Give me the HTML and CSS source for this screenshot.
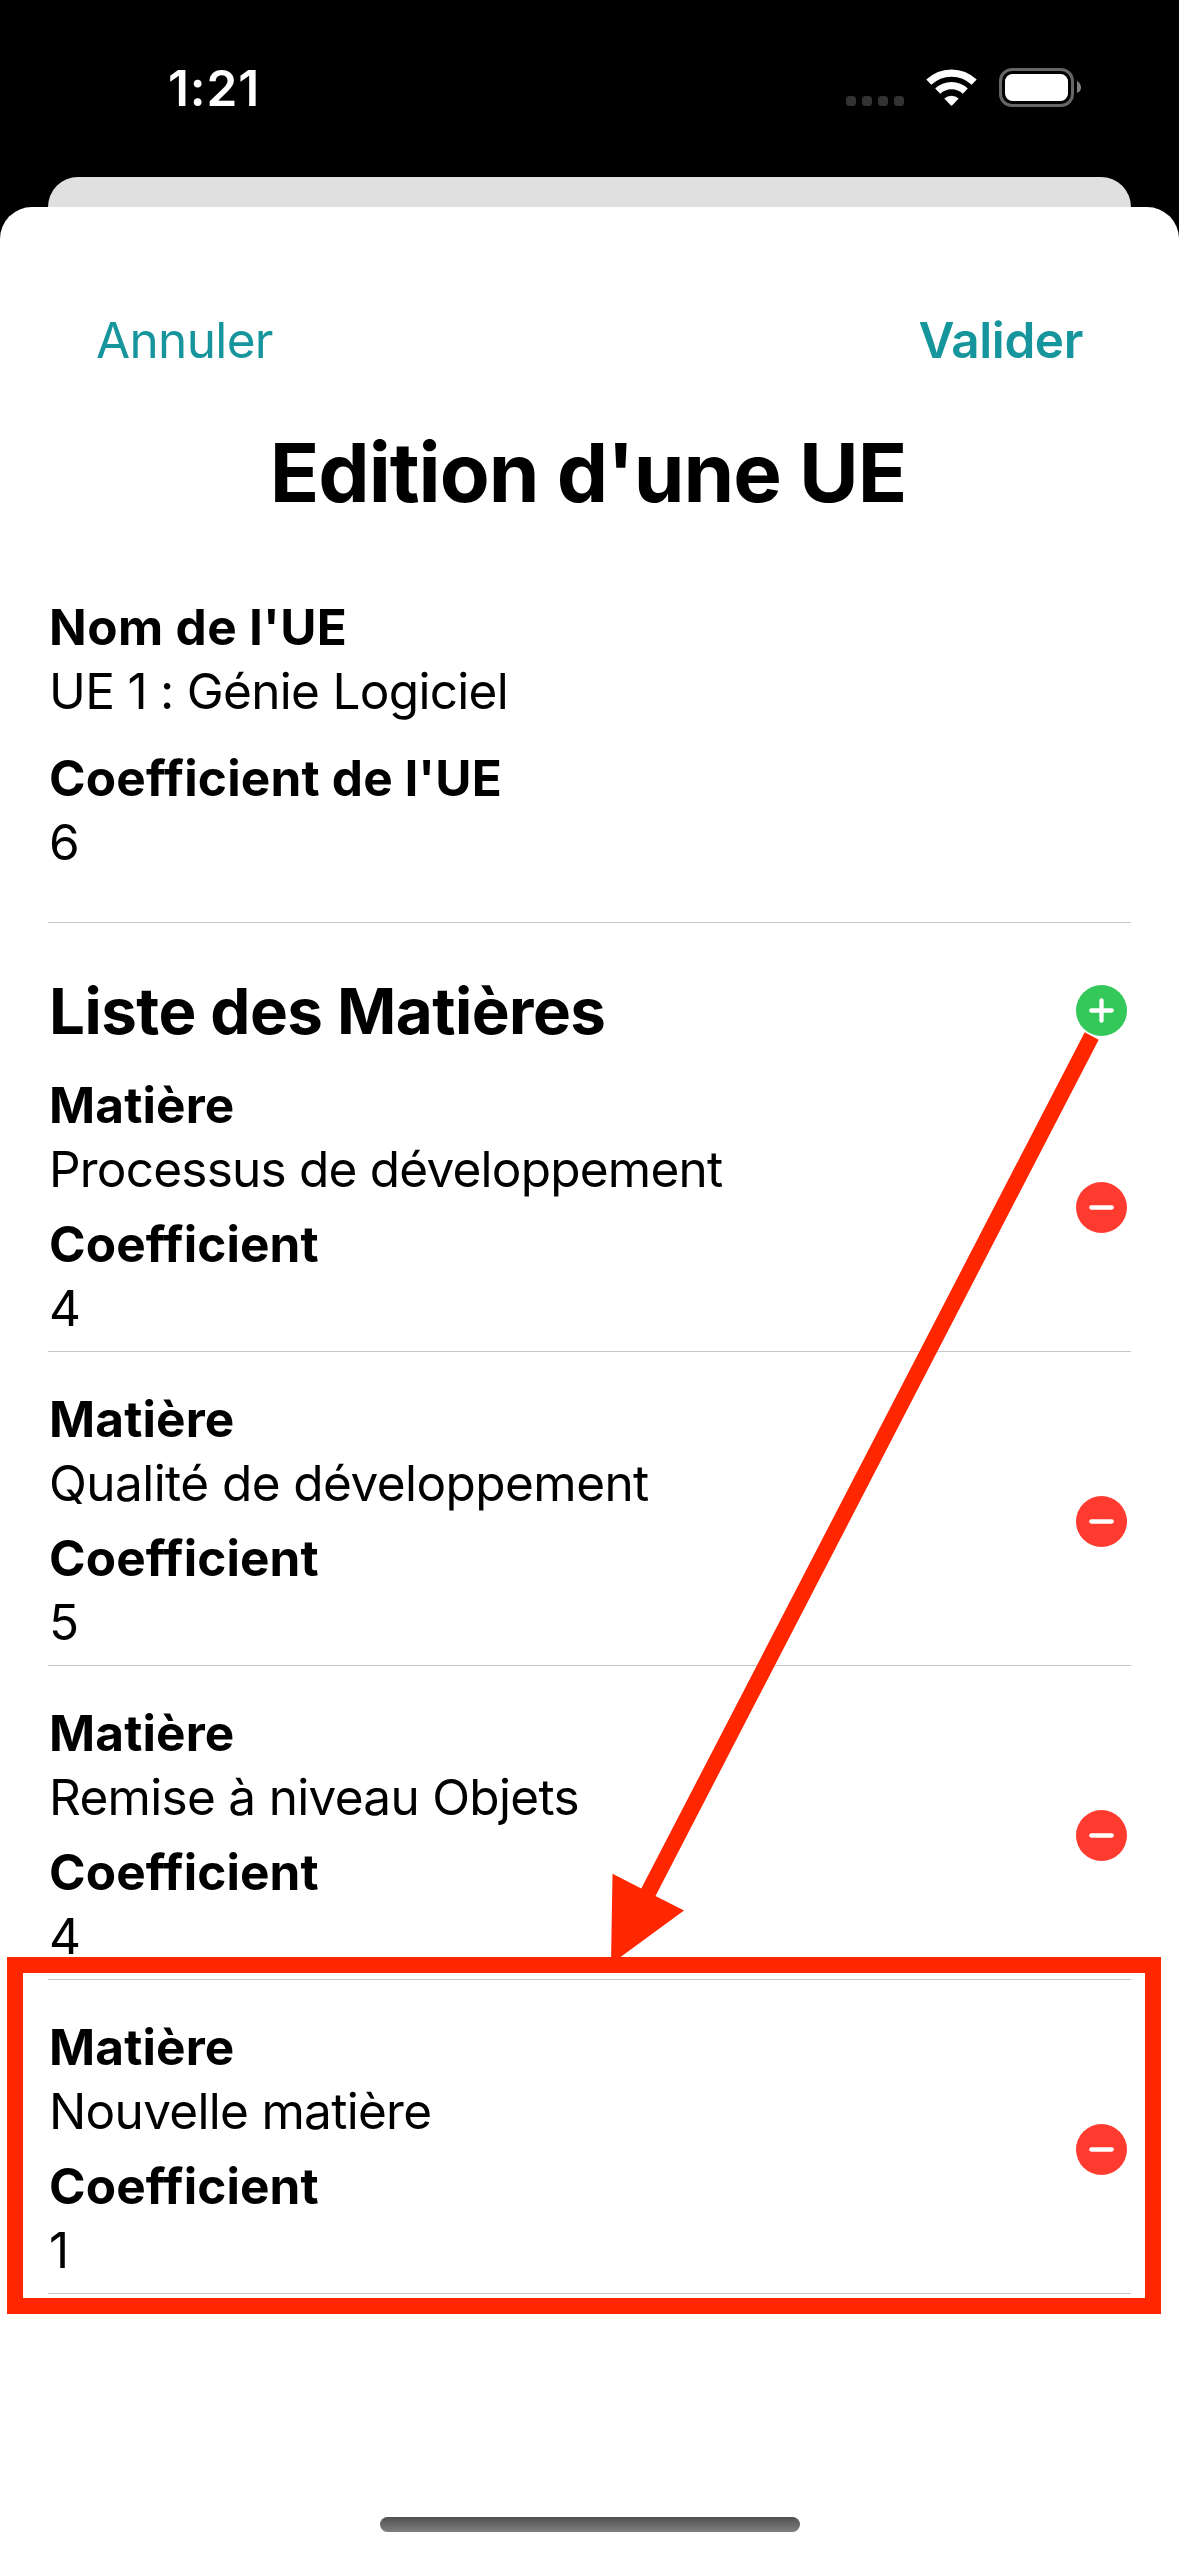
FILE: index.html
```html
<!DOCTYPE html>
<html lang="fr">
<head>
<meta charset="utf-8">
<title>Edition d'une UE</title>
<link rel="stylesheet" href="styles.css">
</head>
<body>
<div class="screen">
  <header class="status">
    <span class="time">1:21</span>
    <svg class="status-icons" width="236" height="40" viewBox="0 0 236 40">
      <g fill="#333">
        <rect x="0" y="28" width="10" height="10" rx="3.5"/>
        <rect x="16" y="28" width="10" height="10" rx="3.5"/>
        <rect x="32" y="28" width="10" height="10" rx="3.5"/>
        <rect x="48" y="28" width="10" height="10" rx="3.5"/>
      </g>
      <g fill="none" stroke="#fff">
        <path d="M82.8 14.2A32.7 32.7 0 0 1 128.2 14.2" stroke-width="7.2"/>
        <path d="M91.7 23.2A19.8 19.8 0 0 1 119.3 23.2" stroke-width="7.2"/>
      </g>
      <path d="M98.3 30.4A11 11 0 0 1 112.7 30.4L106.3 37.3Q105.5 38 104.7 37.3Z" fill="#fff"/>
      <rect x="154.5" y="1.5" width="72" height="36" rx="11.5" fill="none" stroke="#666" stroke-width="3"/>
      <rect x="159" y="6" width="63" height="27" rx="7.5" fill="#fff"/>
      <path d="M231 13Q235 15.500 235 19.500Q235 23.500 231 25Z" fill="#808080"/>
    </svg>
  </header>
  <div class="backdrop-card"></div>
  <main class="sheet">
    <nav class="toolbar">
      <span class="cancel">Annuler</span>
      <span class="confirm">Valider</span>
    </nav>
    <h1 class="title"><span>Edition d'une UE</span></h1>
    <section class="unit">
      <div class="field">
        <div class="label unit-name">Nom de l'UE</div>
        <div class="value unit-value">UE 1 : Génie Logiciel</div>
      </div>
      <div class="field">
        <div class="label unit-coef">Coefficient de l'UE</div>
        <div class="value">6</div>
      </div>
    </section>
    <section class="list">
      <div class="list-head">
        <h2 class="list-title">Liste des Matières</h2>
        <svg class="btn" viewBox="0 0 51 51"><circle cx="25.500" cy="25.500" r="25.500" fill="#34c759"/><path d="M15.300 25.500H35.700M25.500 15.300V35.700" stroke="#fff" stroke-width="4.300" stroke-linecap="round"/></svg>
      </div>
      <article class="row">
        <div class="fields">
          <div class="field"><div class="label subject">Matière</div><div class="value process">Processus de développement</div></div>
          <div class="field"><div class="label coef">Coefficient</div><div class="value">4</div></div>
        </div>
        <svg class="btn" viewBox="0 0 51 51"><circle cx="25.500" cy="25.500" r="25.500" fill="#ff3b30"/><path d="M15.300 25.500H35.700" stroke="#fff" stroke-width="4.300" stroke-linecap="round"/></svg>
      </article>
      <article class="row">
        <div class="fields">
          <div class="field"><div class="label subject">Matière</div><div class="value quality">Qualité de développement</div></div>
          <div class="field"><div class="label coef">Coefficient</div><div class="value">5</div></div>
        </div>
        <svg class="btn" viewBox="0 0 51 51"><circle cx="25.500" cy="25.500" r="25.500" fill="#ff3b30"/><path d="M15.300 25.500H35.700" stroke="#fff" stroke-width="4.300" stroke-linecap="round"/></svg>
      </article>
      <article class="row">
        <div class="fields">
          <div class="field"><div class="label subject">Matière</div><div class="value">Remise à niveau Objets</div></div>
          <div class="field"><div class="label coef">Coefficient</div><div class="value">4</div></div>
        </div>
        <svg class="btn" viewBox="0 0 51 51"><circle cx="25.500" cy="25.500" r="25.500" fill="#ff3b30"/><path d="M15.300 25.500H35.700" stroke="#fff" stroke-width="4.300" stroke-linecap="round"/></svg>
      </article>
      <article class="row">
        <div class="fields">
          <div class="field"><div class="label subject">Matière</div><div class="value">Nouvelle matière</div></div>
          <div class="field"><div class="label coef">Coefficient</div><div class="value">1</div></div>
        </div>
        <svg class="btn" viewBox="0 0 51 51"><circle cx="25.500" cy="25.500" r="25.500" fill="#ff3b30"/><path d="M15.300 25.500H35.700" stroke="#fff" stroke-width="4.300" stroke-linecap="round"/></svg>
      </article>
    </section>
    <div class="home-indicator"></div>
  </main>
  <svg class="annotation" viewBox="0 0 1179 2556">
    <rect x="15" y="1965" width="1138" height="341" fill="none" stroke="#ff2600" stroke-width="16"/>
    <path d="M1084.700 1032.300L1098.700 1039.700L655.500 1896L684 1910.500L611 1964L612.500 1873.700L641.300 1888.600Z" fill="#ff2600"/>
  </svg>
</div>
</body>
</html>
```
FILE: styles.css
```css
* { box-sizing: border-box; }

body {
  margin: 0;
  background: #000;
  font-family: Inter, "Liberation Sans", sans-serif;
  color: #000;
}

.screen {
  position: relative;
  display: flex;
  flex-direction: column;
  width: 1179px;
  height: 2556px;
  overflow: hidden;
  background: #000;
}

.status {
  display: flex;
  justify-content: space-between;
  align-items: flex-start;
  height: 177px;
  padding: 56px 97px 0 168px;
  color: #fff;
}

.time {
  font-size: 49.5px;
  font-weight: 600;
  line-height: 64px;
  letter-spacing: 0.9px;
}

.status-icons { margin-top: 12px; }

.backdrop-card {
  height: 60px;
  margin: 0 48px -30px;
  border-radius: 30px 30px 0 0;
  background: #e0e0e0;
}

.sheet {
  position: relative;
  display: flex;
  flex: 1;
  flex-direction: column;
  padding: 101px 48px 24px;
  border-radius: 32px 32px 0 0;
  background: #fff;
}

.toolbar {
  display: flex;
  justify-content: space-between;
  padding: 0 48px;
  color: #17959c;
  font-size: 49.5px;
  line-height: 64px;
}

.cancel { letter-spacing: -0.65px; }

.confirm {
  font-weight: 600;
  letter-spacing: -0.4px;
}

.title {
  margin: 56px 0 77px;
  padding-right: 3px;
  font-size: 81.6px;
  font-weight: 700;
  line-height: 90px;
  letter-spacing: -1.05px;
  text-align: center;
  white-space: nowrap;
}

.unit {
  display: flex;
  flex-direction: column;
  gap: 23px;
  padding-bottom: 48px;
  border-bottom: 1px solid #c6c6c8;
}

.label,
.value {
  padding-left: 1px;
  font-size: 49.5px;
  line-height: 64px;
  white-space: nowrap;
}

.label {
  font-weight: 700;
  letter-spacing: 0.15px;
}

.value { letter-spacing: -0.7px; }

.unit-name { letter-spacing: 0.4px; }

.unit-coef { letter-spacing: 0.2px; }

.process { letter-spacing: -0.78px; }

.quality { letter-spacing: -0.56px; }

.coef { letter-spacing: 0.1px; }

.list-head {
  display: flex;
  justify-content: space-between;
  align-items: center;
  height: 115px;
  padding: 60px 4px 0 1px;
}

.list-title {
  margin: 0;
  font-size: 63.7px;
  font-weight: 700;
  line-height: 55px;
  letter-spacing: -0.55px;
  white-space: nowrap;
}

.btn {
  display: block;
  width: 51px;
  height: 51px;
}

.row {
  display: flex;
  justify-content: space-between;
  align-items: center;
  height: 314px;
  padding: 35px 4px 11px 0;
  border-bottom: 1px solid #c6c6c8;
}

.row .btn { margin-top: 2px; }

.fields {
  display: flex;
  flex-direction: column;
  gap: 11px;
}

.home-indicator {
  width: 420px;
  height: 15px;
  margin: auto auto 0;
  border-radius: 8px;
  background: linear-gradient(#505050, #808080);
}

.annotation {
  position: absolute;
  inset: 0;
  width: 1179px;
  height: 2556px;
}
```
